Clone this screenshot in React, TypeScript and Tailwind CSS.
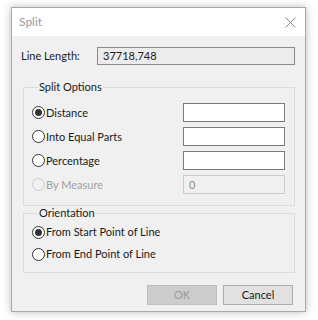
import React from 'react';

const Radio: React.FC<{ checked?: boolean; disabled?: boolean }> = ({ checked, disabled }) => (
  <span
    className={`w-[13px] h-[13px] rounded-full border flex items-center justify-center shrink-0 ${
      disabled ? 'border-[#cccccc] bg-[#f0f0f0]' : 'border-[#333333] bg-white'
    }`}
  >
    {checked && <span className="w-[7px] h-[7px] rounded-full bg-[#333333]" />}
  </span>
);

const Row: React.FC<{ label: string; checked?: boolean; disabled?: boolean; value?: string }> = ({
  label,
  checked,
  disabled,
  value,
}) => (
  <div className="flex items-center h-[19px]">
    <Radio checked={checked} disabled={disabled} />
    <span className={`ml-[1px] ${disabled ? 'text-[#a0a0a0]' : 'text-[#1a1a1a]'}`}>{label}</span>
    <div
      className={`ml-auto w-[102px] h-[19px] border flex items-center pl-[5px] ${
        disabled ? 'border-[#cccccc] bg-[#f0f0f0] text-[#8a8a8a]' : 'border-[#7a7a7a] bg-white'
      }`}
    >
      {value}
    </div>
  </div>
);

const App: React.FC = () => {
  return (
    <div
      className="w-[318px] h-[320px] bg-white pt-[7px] pl-[11px] text-[11px] leading-[16px]"
      style={{ fontFamily: 'Lato, "Noto Sans", sans-serif' }}
    >
      <div className="w-[295px] h-[305px] border border-[#a8a8a8] shadow-[0_0_8px_rgba(0,0,0,0.28)] flex flex-col">
        {/* title bar */}
        <div className="h-[28px] bg-white flex items-center pl-[7px] pr-[9px]">
          <span className="text-[#9a9a9a] text-[12px]">Split</span>
          <svg className="ml-auto" width="11" height="11" viewBox="0 0 11 11">
            <path d="M0.5 0.5 L10.5 10.5 M10.5 0.5 L0.5 10.5" stroke="#8a8a8a" strokeWidth="1" />
          </svg>
        </div>

        <div className="flex-1 bg-[#f0f0f0] pl-[11px] pr-[10px] pt-[11px] text-[#1a1a1a]">
          <div className="flex items-center h-[18px]">
            <span className="-ml-[2px]">Line Length:</span>
            <div className="ml-auto w-[198px] h-[18px] border border-[#8a8a8a] bg-[#ececec] flex items-center pl-[5px]">
              37718,748
            </div>
          </div>

          <fieldset className="mt-[14px] border border-[#dcdcdc] pl-[8px] pr-[9px] pb-[11px] pt-[8px]">
            <legend className="ml-[6px] px-[1px]">Split Options</legend>
            <div className="flex flex-col gap-[5px]">
              <Row label="Distance" checked />
              <Row label="Into Equal Parts" />
              <Row label="Percentage" />
              <Row label="By Measure" disabled value="0" />
            </div>
          </fieldset>

          <fieldset className="-mt-[1px] border border-[#dcdcdc] pl-[8px] pb-[8px] pt-[1px]">
            <legend className="ml-[6px] px-[1px]">Orientation</legend>
            <div className="flex flex-col gap-[2px]">
              <div className="flex items-center h-[20px]">
                <Radio checked />
                <span className="ml-[1px]">From Start Point of Line</span>
              </div>
              <div className="flex items-center h-[20px]">
                <Radio />
                <span className="ml-[1px]">From End Point of Line</span>
              </div>
            </div>
          </fieldset>

          <div className="flex justify-end gap-[6px] mt-[12px] mr-[2px]">
            <button className="w-[70px] h-[20px] bg-[#cccccc] border border-[#bfbfbf] text-[#9a9a9a]">OK</button>
            <button className="w-[70px] h-[20px] bg-[#e1e1e1] border border-[#adadad] text-[#1a1a1a]">Cancel</button>
          </div>
        </div>
      </div>
    </div>
  );
};

export default App;
